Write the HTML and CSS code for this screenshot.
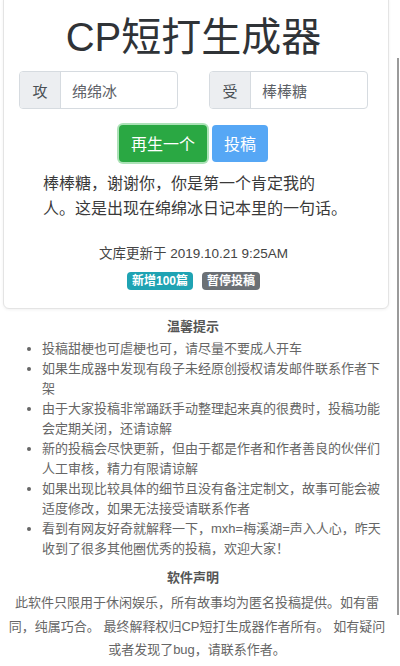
FILE: index.html
```html
<!DOCTYPE html>
<html lang="zh">
<head>
<meta charset="utf-8">
<title>CP短打生成器</title>
<link rel="stylesheet" href="styles.css">
</head>
<body>
<div class="page">
  <div class="card">
    <h1 class="title">CP短打生成器</h1>
    <div class="inputs">
      <div class="input-group">
        <span class="prepend">攻</span>
        <span class="field">绵绵冰</span>
      </div>
      <div class="input-group">
        <span class="prepend">受</span>
        <span class="field">棒棒糖</span>
      </div>
    </div>
    <div class="buttons">
      <span class="btn btn-green">再生一个</span>
      <span class="btn btn-blue">投稿</span>
    </div>
    <p class="story">棒棒糖，谢谢你，你是第一个肯定我的<br>人。这是出现在绵绵冰日记本里的一句话。</p>
    <div class="updated">文库更新于 2019.10.21 9:25AM</div>
    <div class="badges">
      <span class="badge badge-teal">新增100篇</span>
      <span class="badge badge-gray">暂停投稿</span>
    </div>
  </div>

  <section class="tips">
    <h2 class="section-title">温馨提示</h2>
    <ul class="tip-list">
      <li>投稿甜梗也可虐梗也可，请尽量不要成人开车</li>
      <li>如果生成器中发现有段子未经原创授权请发邮件联系作者下架</li>
      <li>由于大家投稿非常踊跃手动整理起来真的很费时，投稿功能会定期关闭，还请谅解</li>
      <li>新的投稿会尽快更新，但由于都是作者和作者善良的伙伴们人工审核，精力有限请谅解</li>
      <li>如果出现比较具体的细节且没有备注定制文，故事可能会被适度修改，如果无法接受请联系作者</li>
      <li>看到有网友好奇就解释一下，mxh=梅溪湖=声入人心，昨天收到了很多其他圈优秀的投稿，欢迎大家！</li>
    </ul>
    <h2 class="section-title section-title-2">软件声明</h2>
    <p class="statement">此软件只限用于休闲娱乐，所有故事均为匿名投稿提供。如有雷<br>同，纯属巧合。 最终解释权归CP短打生成器作者所有。 如有疑问<br>或者发现了bug，请联系作者。</p>
  </section>

  <div class="scrollbar"></div>
</div>
</body>
</html>
```

FILE: styles.css
```css
html, body {
  margin: 0;
  padding: 0;
  background: #ffffff;
}

body {
  font-family: "Liberation Sans", "Noto Sans CJK SC", sans-serif;
  color: #333333;
  width: 400px;
  height: 666px;
  overflow: hidden;
}

.page {
  position: relative;
  width: 400px;
  height: 666px;
  overflow: hidden;
}

.card {
  margin: -6px 0 0 3px;
  width: 386px;
  box-sizing: border-box;
  padding: 18px 20px 18px 15px;
  border: 1px solid #e4e4e4;
  border-radius: 6px;
  box-shadow: 0 1px 3px rgba(0, 0, 0, 0.06);
  background: #ffffff;
}

.title {
  margin: 0;
  font-size: 40px;
  line-height: 48px;
  font-weight: 400;
  text-align: center;
  color: #2f3337;
}

.inputs {
  display: flex;
  justify-content: space-between;
  margin-top: 10px;
}

.input-group {
  display: flex;
  width: 159px;
  height: 38px;
  box-sizing: border-box;
  border: 1px solid #d6dbe0;
  border-radius: 4px;
  overflow: hidden;
  font-family: "Noto Sans CJK SC", sans-serif;
  font-size: 15px;
}

.prepend {
  display: flex;
  align-items: center;
  justify-content: center;
  width: 40px;
  background: #eceef1;
  border-right: 1px solid #d6dbe0;
  color: #4a4f55;
}

.field {
  display: flex;
  align-items: center;
  padding-left: 11px;
  color: #5c6066;
}

.buttons {
  display: flex;
  justify-content: center;
  gap: 5px;
  margin-top: 16px;
}

.btn {
  display: inline-block;
  height: 37px;
  line-height: 37px;
  padding: 0 12px;
  border-radius: 4px;
  font-family: "Noto Sans CJK SC", sans-serif;
  font-size: 16px;
  color: #ffffff;
}

.btn-green {
  background: #2aa843;
  box-shadow: 0 0 0 2px rgba(72, 190, 96, 0.45);
}

.btn-blue {
  background: #56a7f5;
}

.story {
  margin: 8px 0 0 24px;
  font-family: "Noto Sans CJK SC", sans-serif;
  font-size: 16px;
  line-height: 25px;
  color: #3a3a3a;
}

.updated {
  margin-top: 24px;
  text-align: center;
  font-size: 13.5px;
  line-height: 20px;
  color: #444444;
}

.badges {
  display: flex;
  justify-content: center;
  gap: 9px;
  margin-top: 8px;
}

.badge {
  display: inline-block;
  height: 18px;
  line-height: 18px;
  padding: 0 5px;
  border-radius: 4px;
  font-size: 12px;
  font-weight: 700;
  color: #ffffff;
}

.badge-teal {
  background: #1fa3b3;
}

.badge-gray {
  background: #6b7075;
}

.tips {
  padding: 8px 0 0 0;
  color: #666666;
  font-family: "Liberation Sans", "Noto Sans CJK SC", sans-serif;
  font-size: 13px;
}

.section-title {
  margin: 0;
  font-size: 13px;
  line-height: 20px;
  font-weight: 700;
  text-align: center;
  color: #555555;
  padding-right: 14px;
}

.section-title-2 {
  margin-top: 9px;
}

.tip-list {
  margin: 2px 0 0 0;
  padding: 0 0 0 42px;
  width: 341px;
  line-height: 20px;
}

.tip-list li::marker {
  color: #666666;
}

.statement {
  margin: 3px 0 0 0;
  text-align: center;
  line-height: 23.5px;
  color: #666666;
  padding-right: 6px;
}

.scrollbar {
  position: absolute;
  left: 397px;
  top: 58px;
  width: 2px;
  height: 557px;
  background: #9a9a9a;
}
```
